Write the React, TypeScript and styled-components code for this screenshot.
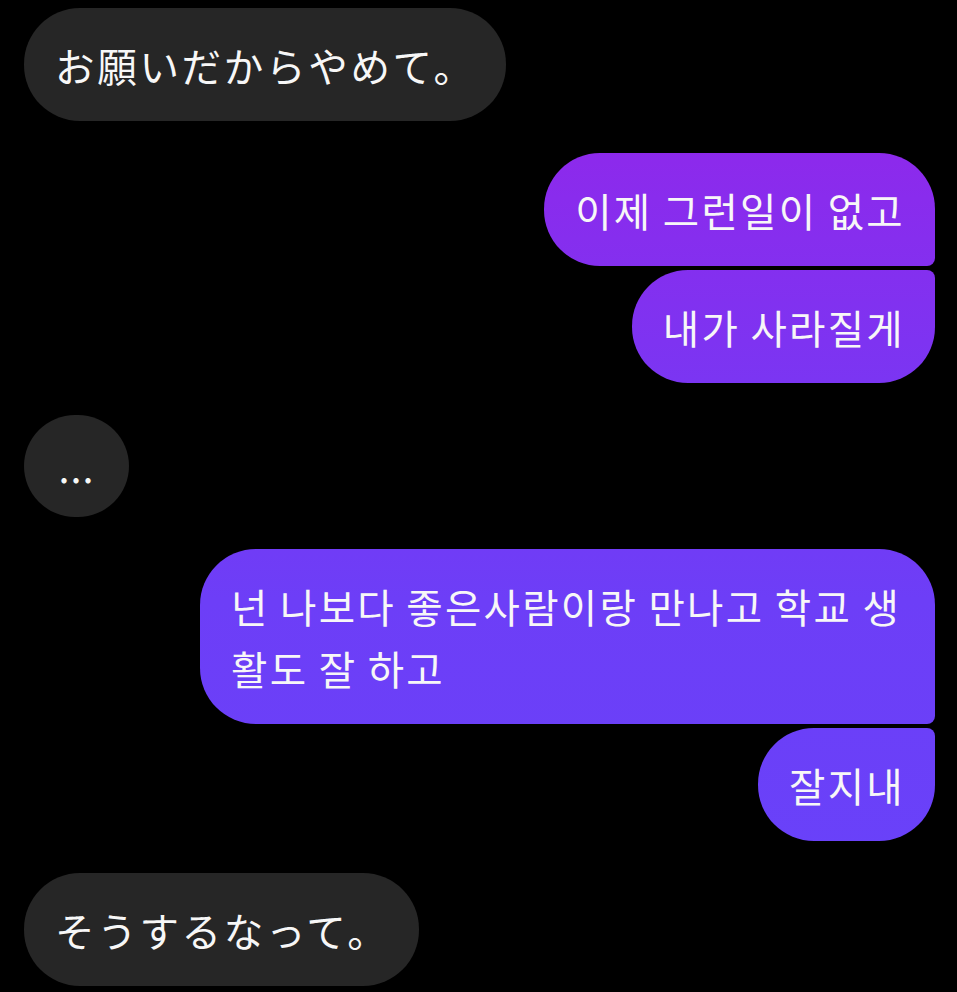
import React from 'react';
import styled, { createGlobalStyle, css } from 'styled-components';

const GlobalStyle = createGlobalStyle`
	html, body {
		margin: 0;
		padding: 0;
		background: #000;
	}
	body {
		font-family: 'Noto Sans CJK KR', 'Noto Sans CJK JP', 'Noto Sans', sans-serif;
		-webkit-font-smoothing: antialiased;
	}
`;

type Message = {
	text: string;
	lang?: 'ko' | 'ja';
};

type Group = {
	mine: boolean;
	messages: Message[];
};

const conversation: Group[] = [
	{ mine: false, messages: [{ text: 'お願いだからやめて。', lang: 'ja' }] },
	{ mine: true, messages: [{ text: '이제 그런일이 없고' }, { text: '내가 사라질게' }] },
	{ mine: false, messages: [{ text: '...' }] },
	{ mine: true, messages: [{ text: '넌 나보다 좋은사람이랑 만나고 학교 생활도 잘 하고' }, { text: '잘지내' }] },
	{ mine: false, messages: [{ text: 'そうするなって。', lang: 'ja' }] },
];

function cornersFor(mine: boolean, index: number, count: number) {
	const big = 56;
	const small = 8;
	const top = count > 1 && index > 0 ? small : big;
	const bottom = count > 1 && index < count - 1 ? small : big;
	return mine
		? `${big}px ${top}px ${bottom}px ${big}px`
		: `${top}px ${big}px ${big}px ${bottom}px`;
}

export default function App() {
	return (
		<>
			<GlobalStyle />
			<Thread>
				{conversation.map((group, gi) => (
					<MessageGroup key={gi} $mine={group.mine}>
						{group.messages.map((m, i) => (
							<Bubble
								key={i}
								$mine={group.mine}
								$ja={m.lang === 'ja'}
								$dots={m.text === '...'}
								lang={m.lang ?? 'ko'}
								style={{ borderRadius: cornersFor(group.mine, i, group.messages.length) }}
							>
								{m.text}
							</Bubble>
						))}
					</MessageGroup>
				))}
			</Thread>
		</>
	);
}

const Thread = styled.div`
	display: flex;
	flex-direction: column;
	gap: 32px;
	padding: 8px 22px 8px 24px;
	min-height: 100vh;
	box-sizing: border-box;
	background: #000;
`;

const MessageGroup = styled.div<{ $mine: boolean }>`
	display: flex;
	flex-direction: column;
	gap: 4px;
	align-items: ${p => (p.$mine ? 'flex-end' : 'flex-start')};
`;

const Bubble = styled.div<{ $mine: boolean; $ja: boolean; $dots: boolean }>`
	box-sizing: border-box;
	max-width: 735px;
	padding: 25.5px 30px 25.5px 31px;
	font-size: 39.5px;
	line-height: 62px;
	letter-spacing: 2.3px;
	word-spacing: -3px;
	color: #f7f7f7;
	white-space: pre-wrap;

	background: ${p =>
		p.$mine
			? 'linear-gradient(180deg, #a01fe5 0px, #8c2aec 160px, #7b35f2 380px, #6d3ef7 600px, #6743fa 992px) fixed'
			: '#262626'};

	${p => p.$ja && css`
		font-family: 'Noto Sans CJK JP', sans-serif;
		letter-spacing: 2.7px;
		word-spacing: normal;
	`}

	${p => p.$dots && css`
		width: 105px;
		padding: 25.5px 0;
		line-height: 51px;
		text-align: center;
		letter-spacing: 1px;
		word-spacing: normal;
	`}
`;
